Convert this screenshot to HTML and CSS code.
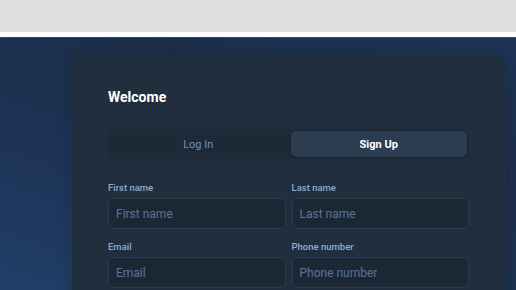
FILE: index.html
```html
<!DOCTYPE html>
<html lang="en">
<head>
<meta charset="utf-8"/>
<meta content="width=device-width, initial-scale=1.0" name="viewport"/>
<title>Welcome</title>
<link rel="stylesheet" href="styles.css">
</head>
<body>
<div class="topbar"></div>
<div class="page">
  <div class="card">
    <h2>Welcome</h2>
    <div class="tabs">
      <button class="tab">Log In</button>
      <button class="tab active">Sign Up</button>
    </div>
    <form class="fields">
      <div class="field">
        <label for="firstName">First name</label>
        <input id="firstName" placeholder="First name"/>
      </div>
      <div class="field">
        <label for="lastName">Last name</label>
        <input id="lastName" placeholder="Last name"/>
      </div>
      <div class="field">
        <label for="email">Email</label>
        <input id="email" placeholder="Email"/>
      </div>
      <div class="field">
        <label for="phone">Phone number</label>
        <input id="phone" placeholder="Phone number"/>
      </div>
    </form>
  </div>
</div>
</body>
</html>
```
FILE: styles.css
```css
body {
  margin: 0;
  font-family: Roboto, "Liberation Sans", sans-serif;
  background: #ffffff;
  height: 290px;
  overflow: hidden;
}
.topbar {
  height: 32px;
  background: #e0e0e0;
  margin-bottom: 5px;
}
.page {
  height: 253px;
  border-top: 1px solid #3a4656;
  background: linear-gradient(20deg, #20406a 0%, #1d3152 45%, #1c2e4b 70%, #1e3456 100%);
  padding: 17px 9px 0 72px;
  overflow: hidden;
}
.card {
  width: 361px;
  background: #212e3d;
  border-radius: 14px;
  padding: 34px 38px 40px 36px;
  box-shadow: 0 0 14px rgba(0,0,0,0.15);
}
h2 {
  margin: 0 0 24px;
  font-size: 14px;
  font-weight: 700;
  color: #ffffff;
  line-height: 16px;
}
.tabs {
  display: grid;
  grid-template-columns: 1fr 1fr;
  gap: 4px;
  background: #1d2936;
  border-radius: 6px;
  padding: 2px;
  margin-bottom: 23px;
}
.tab {
  height: 26px;
  border: none;
  border-radius: 5px;
  background: none;
  color: #6f90bb;
  font-family: inherit;
  font-size: 11px;
  cursor: pointer;
}
.tab.active {
  background: #2c3d52;
  color: #ffffff;
  font-weight: 700;
  box-shadow: 0 1px 2px rgba(0,0,0,0.2);
}
.fields {
  display: grid;
  grid-template-columns: 1fr 1fr;
  column-gap: 6px;
  row-gap: 12px;
}
.field label {
  display: block;
  font-size: 9.5px;
  font-weight: 500;
  color: #8badd6;
  margin-bottom: 5px;
  line-height: 11px;
}
.field input {
  box-sizing: border-box;
  width: 100%;
  height: 31px;
  background: #1c2734;
  border: 1px solid #2b3b4f;
  border-radius: 6px;
  padding: 0 7px;
  color: #ffffff;
  font-family: inherit;
  font-size: 12px;
}
.field input::placeholder { color: #55759b; }
```
